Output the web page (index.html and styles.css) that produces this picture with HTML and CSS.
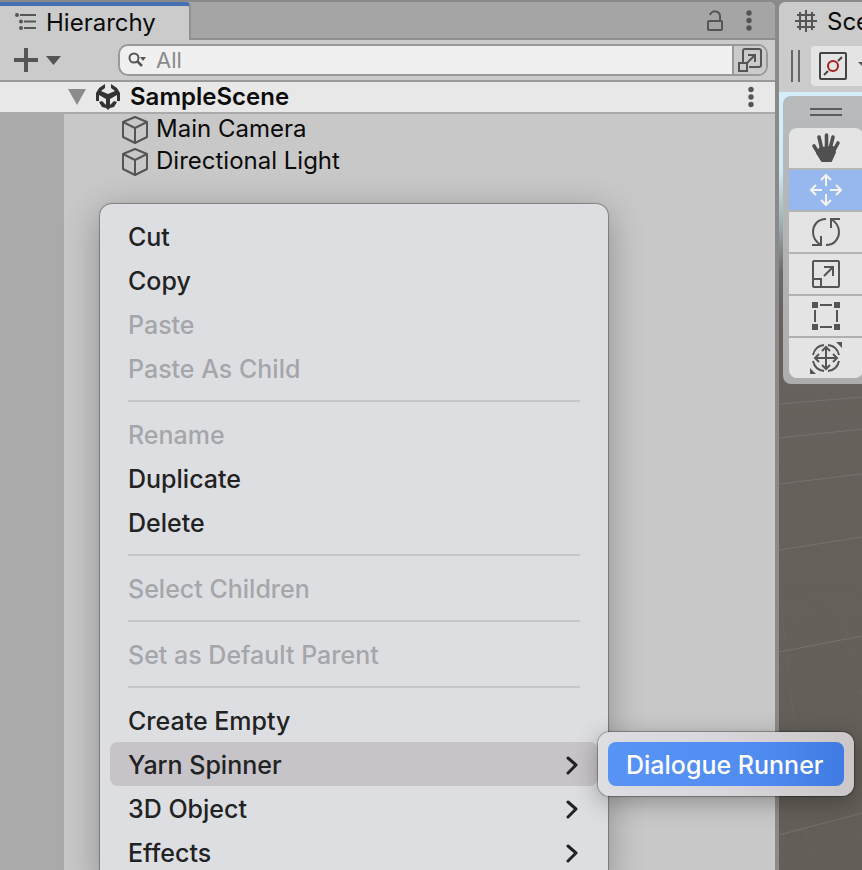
FILE: index.html
```html
<!DOCTYPE html>
<html lang="en">
<head>
  <meta charset="UTF-8" />
  <meta name="viewport" content="width=device-width, initial-scale=1" />
  <title>Hierarchy</title>
  <link rel="stylesheet" href="styles.css">
</head>
<body>

<div class="editor">
  <section class="hierarchy">
    <div class="tab-bar">
      <button class="tab">
        <svg width="22" height="18" viewBox="0 0 22 18" fill="none" stroke="#555" stroke-width="2">
          <path d="M5 2h16M9 8.500h12M9 15h12" />
          <g fill="#555" stroke="none"><circle cx="2" cy="2" r="2" /><circle cx="6" cy="8.500" r="2" /><circle cx="6" cy="15" r="2" /></g>
        </svg>
        Hierarchy
      </button>
      <div class="tab-tools">
        <button class="icon-btn" aria-label="Lock">
          <svg width="18" height="22" viewBox="0 0 18 22" fill="none" stroke="#555" stroke-width="2">
            <rect x="2" y="11" width="14" height="9" rx="1" />
            <path d="M4 5c1-3 4-4 6-3.500c3 .6 4 2.500 4 5V11" />
          </svg>
        </button>
        <button class="icon-btn" aria-label="Panel menu">
          <svg width="6" height="22" viewBox="0 0 6 22" fill="#555"><circle cx="3" cy="3" r="2.700" /><circle cx="3" cy="10.500" r="2.700" /><circle cx="3" cy="18" r="2.700" /></svg>
        </button>
      </div>
    </div>

    <div class="toolbar">
      <button class="icon-btn add" aria-label="Create">
        <svg width="48" height="24" viewBox="0 0 48 24">
          <path d="M12 0v24M0 12h24" stroke="#555" stroke-width="4" />
          <path d="M32 8h15l-7.500 9z" fill="#555" />
        </svg>
      </button>
      <div class="search">
        <svg class="search-icon" width="20" height="16" viewBox="0 0 20 16" fill="none" stroke="#555" stroke-width="2">
          <circle cx="6" cy="6" r="4.500" />
          <path d="M9 9l5 5" stroke-width="2.500" />
          <path d="M12 5h6l-3 4z" fill="#555" stroke="none" />
        </svg>
        <input type="text" placeholder="All" aria-label="Search hierarchy">
        <button class="icon-btn picker" aria-label="Open search window">
          <svg width="24" height="24" viewBox="0 0 24 24" fill="none" stroke="#555" stroke-width="2">
            <path d="M5 14V3q0-2 2-2h14q2 0 2 2v14q0 2-2 2H11" />
            <rect x="1" y="15" width="8" height="8" />
            <path d="M9 15l8-8M10 7h7v7" />
          </svg>
        </button>
      </div>
    </div>

    <div class="scene-row">
      <svg width="18" height="16" viewBox="0 0 18 16"><path d="M0 0h18L9 16z" fill="#8c8c8c" /></svg>
      <svg class="unity" width="24" height="26" viewBox="0 0 24 26" fill="#333">
        <path d="M9 0v4L5 7l7 3 7-3-4-3V0l6 4 3 5v8h-3v-6l-7 4v6h-4v-6l-7-4v6H0V9l3-5z" />
        <path d="M3 18l3-1 4 4h4l4-4 3 1-3 5-4 1-2 2-2-2-4-1z" />
      </svg>
      <h1>SampleScene</h1>
      <button class="icon-btn" aria-label="Scene menu">
        <svg width="6" height="22" viewBox="0 0 6 22" fill="#555"><circle cx="3" cy="3.500" r="2.700" /><circle cx="3" cy="11" r="2.700" /><circle cx="3" cy="18.500" r="2.700" /></svg>
      </button>
    </div>

    <ul class="tree">
      <li>
        <svg width="26" height="28" viewBox="0 0 26 28" fill="none" stroke="#555" stroke-width="2" stroke-linejoin="round"><path d="M13 1l12 5v15l-12 6-12-6V6zM1 6l12 6 12-6M13 12v15" /></svg>
        Main Camera
      </li>
      <li>
        <svg width="26" height="28" viewBox="0 0 26 28" fill="none" stroke="#555" stroke-width="2" stroke-linejoin="round"><path d="M13 1l12 5v15l-12 6-12-6V6zM1 6l12 6 12-6M13 12v15" /></svg>
        Directional Light
      </li>
    </ul>
  </section>

  <section class="scene">
    <div class="scene-tab">
      <svg width="22" height="22" viewBox="0 0 22 22" stroke="#555" stroke-width="2"><path d="M5 2v18M11 0v22M17 2v18M2 5h18M0 11h22M2 17h18" /></svg>
      Scene
    </div>
    <div class="scene-tools">
      <span class="grip"></span>
      <button class="pivot" aria-label="Pivot mode">
        <svg width="54" height="28" viewBox="0 0 54 28" fill="none" stroke="#444" stroke-width="2">
          <rect x="1" y="1" width="26" height="26" rx="1" />
          <path d="M5 23l4-4M19 9l4-4" />
          <circle cx="14" cy="14" r="5" stroke="#a8201a" />
          <path d="M39 10h12l-6 6z" fill="#555" stroke="none" />
        </svg>
      </button>
    </div>
    <div class="viewport">
      <svg class="grid-lines" width="100%" height="778" viewBox="0 0 83 778" preserveAspectRatio="none" fill="none">
        <path d="M0 312l83-7M0 346l83-9M0 392l83-10M0 458l83-13M0 560l83-16M0 743l83-22" stroke="#75726f" />
        <path d="M0 513l83-14M0 523l83-14M0 533l83-15M0 547l83-15M0 574l83-17M0 588l83-18M0 603l83-19M0 620l83-20M0 770l83-24M2 510l14 130 16 138M60 503l23 100" stroke="#6c6761" stroke-opacity="0.5" />
      </svg>
      <div class="tools">
        <span class="handle"></span>
        <button aria-label="View tool">
          <svg width="32" height="32" viewBox="0 0 32 32" fill="none" stroke="#505050" stroke-linecap="round" stroke-linejoin="round">
            <path d="M12 18L9 5M16.500 17V3M20 17l3-12M23 20l5-9M9 22l-5-8" stroke-width="3.600" />
            <path d="M10 16l13-1 2 5-4 9h-9l-5-8z" fill="#505050" stroke-width="2" />
          </svg>
        </button>
        <button class="active" aria-label="Move tool">
          <svg width="32" height="32" viewBox="0 0 32 32" fill="none" stroke="#f4f4f4" stroke-width="2"><path d="M16 12V1M11 6l5-5 5 5M16 20v11M11 26l5 5 5-5M12 16H1M6 11l-5 5 5 5M20 16h11M26 11l5 5-5 5" /></svg>
        </button>
        <button aria-label="Rotate tool">
          <svg width="32" height="32" viewBox="0 0 32 32" fill="none" stroke="#555" stroke-width="2"><path d="M16 3C7 3 3 10 3 16s3 10 8 13M2 29h9v-9M16 29c9 0 13-7 13-13S26 6 21 3M30 3h-9v9" /></svg>
        </button>
        <button aria-label="Scale tool">
          <svg width="32" height="32" viewBox="0 0 32 32" fill="none" stroke="#555" stroke-width="2"><rect x="3" y="3" width="26" height="26" rx="1" /><path d="M3 21h8v8M14 18l9-9M14 9h9v9" /></svg>
        </button>
        <button aria-label="Rect tool">
          <svg width="32" height="32" viewBox="0 0 32 32" fill="#555"><path d="M2 2h6v6H2zM24 2h6v6h-6zM2 24h6v6H2zM24 24h6v6h-6zM10 4h12v2H10zM10 26h12v2H10zM4 10h2v12H4zM26 10h2v12h-2z" /></svg>
        </button>
        <button aria-label="Transform tool">
          <svg width="32" height="32" viewBox="0 0 32 32" fill="none" stroke="#555" stroke-width="2">
            <path d="M16 6v20M6 16h20M12 9l4-4 4 4M12 23l4 4 4-4M9 12l-4 4 4 4M23 12l4 4-4 4" />
            <path d="M14 3Q5 4 3 13M18 3Q27 4 29 13M14 29Q5 28 3 19M18 29Q27 28 29 19" />
            <path d="M26 0h6v6zM0 26v6h6z" fill="#555" stroke="none" />
          </svg>
        </button>
      </div>
    </div>
  </section>
</div>

<ul class="menu">
  <li><button>Cut</button></li>
  <li><button>Copy</button></li>
  <li><button disabled>Paste</button></li>
  <li><button disabled>Paste As Child</button></li>
  <li class="separator"></li>
  <li><button disabled>Rename</button></li>
  <li><button>Duplicate</button></li>
  <li><button>Delete</button></li>
  <li class="separator"></li>
  <li><button disabled>Select Children</button></li>
  <li class="separator"></li>
  <li><button disabled>Set as Default Parent</button></li>
  <li class="separator"></li>
  <li><button>Create Empty</button></li>
  <li class="has-submenu">
    <button class="open">Yarn Spinner
      <svg width="14" height="20" viewBox="0 0 14 20"><path d="M2 3l8 7-8 8" /></svg>
    </button>
    <ul class="menu submenu">
      <li><button class="selected">Dialogue Runner</button></li>
    </ul>
  </li>
  <li><button>3D Object
    <svg width="14" height="20" viewBox="0 0 14 20"><path d="M2 3l8 7-8 8" /></svg>
  </button></li>
  <li><button>Effects
    <svg width="14" height="20" viewBox="0 0 14 20"><path d="M2 3l8 7-8 8" /></svg>
  </button></li>
</ul>

</body>
</html>
```
FILE: styles.css
```css
:root {
  --panel: #cbcbcb;
  --line: #999;
  --divider: #8a8a8a;
  --menu-bg: #dddee2;
}

* {
  box-sizing: border-box;
}

body {
  margin: 0;
  height: 100vh;
  overflow: hidden;
  position: relative;
  font-family: Inter, "Liberation Sans", sans-serif;
  font-size: 24px;
  color: #0b0b0b;
}

button {
  font: inherit;
  color: inherit;
  border: none;
  background: none;
  padding: 0;
  cursor: pointer;
}

svg {
  display: block;
  flex: none;
}

ul {
  list-style: none;
  margin: 0;
  padding: 0;
}

.editor {
  display: grid;
  grid-template-columns: minmax(0, 1fr) 83px;
  gap: 4px;
  height: 100%;
  padding-top: 2px;
  background: var(--divider);
}

/* Hierarchy panel */
.hierarchy {
  display: flex;
  flex-direction: column;
  background: #c8c8c8;
  border-top-right-radius: 6px;
  overflow: hidden;
}

.tab-bar {
  display: flex;
  justify-content: space-between;
  height: 38px;
  background: #a5a5a5;
  box-shadow: inset 0 -2px #8f8f8f;
}

.tab {
  display: flex;
  align-items: center;
  gap: 9px;
  width: 191px;
  padding: 0 0 2px 15px;
  background: var(--panel);
  border-top: 4px solid #4370b0;
  border-right: 2px solid #8f8f8f;
  border-top-right-radius: 5px;
}

.tab-tools {
  display: flex;
  align-items: center;
  gap: 22px;
  padding-right: 23px;
}

.toolbar {
  display: flex;
  align-items: center;
  justify-content: space-between;
  height: 42px;
  padding: 0 7px 0 14px;
  background: var(--panel);
  border-bottom: 2px solid var(--line);
}

.search {
  display: flex;
  align-items: center;
  flex: 1;
  height: 32px;
  margin-left: 56px;
  background: #f0f0f0;
  border: 2px solid var(--line);
  border-radius: 10px;
  overflow: hidden;
}

.search-icon {
  margin: 0 8px;
}

.search input {
  flex: 1;
  min-width: 0;
  border: none;
  outline: none;
  background: none;
  padding: 0;
  font: inherit;
  font-size: 22px;
}

.search input::placeholder {
  color: #8a8a8a;
}

.picker {
  width: 34px;
  height: 100%;
  padding-left: 4px;
  background: var(--panel);
  border-left: 2px solid var(--line);
}

.scene-row {
  display: flex;
  align-items: center;
  height: 32px;
  padding: 0 21px 0 68px;
  background: #e8e8e8;
  border-bottom: 2px solid #aaa;
}

.unity {
  margin: 0 10px;
}

.scene-row h1 {
  flex: 1;
  margin: 0;
  font-size: 24px;
  line-height: 28px;
  font-weight: 600;
}

.tree {
  flex: 1;
  border-left: 64px solid #aaa;
}

.tree li {
  display: flex;
  gap: 8px;
  height: 32px;
  padding-left: 58px;
  line-height: 29px;
}

.tree svg {
  margin-top: 2px;
}

/* Scene panel */
.scene {
  display: flex;
  flex-direction: column;
  min-width: 0;
  overflow: hidden;
  background: var(--panel);
  border-top-left-radius: 6px;
}

.scene-tab {
  display: flex;
  align-items: center;
  gap: 10px;
  height: 38px;
  padding-left: 16px;
}

.scene-tools {
  display: flex;
  align-items: center;
  gap: 11px;
  height: 52px;
  padding-left: 12px;
}

.grip {
  flex: none;
  width: 9px;
  height: 32px;
  border: solid #666;
  border-width: 0 2px;
}

.pivot {
  padding: 6px 8px;
  background: #e4e4e4;
  border-radius: 4px;
}

.viewport {
  position: relative;
  flex: 1;
  padding: 4px 0 0 4px;
  background: linear-gradient(#d3eefb, #cfeaf4 80px, #9fb1b5 130px, #6e6b67 180px, #67625d 220px, #635e57);
}

.grid-lines {
  position: absolute;
  inset: 0;
}

.tools {
  position: relative;
  display: flex;
  flex-direction: column;
  gap: 2px;
  width: 86px;
  padding: 0 6px 6px;
  background: linear-gradient(#b8bbbc, #adadad);
  border-radius: 8px;
}

.handle {
  align-self: center;
  width: 32px;
  height: 8px;
  margin: 12px 0 10px;
  border: solid #5c5c5c;
  border-width: 2px 0;
}

.tools button {
  display: flex;
  align-items: center;
  justify-content: center;
  height: 40px;
  background: #e4e4e4;
}

.tools button:nth-of-type(1) {
  border-radius: 8px 8px 0 0;
}

.tools button:last-child {
  border-radius: 0 0 8px 8px;
}

.tools .active {
  background: #96b8ee;
}

/* Context menu */
.menu {
  position: absolute;
  top: 204px;
  left: 100px;
  width: 508px;
  padding: 10px;
  font-size: 25px;
  font-weight: 500;
  color: #222;
  background: var(--menu-bg);
  border-radius: 12px;
  box-shadow: 0 0 1px 1px rgba(0, 0, 0, 0.3), 0 8px 36px rgba(0, 0, 0, 0.3);
}

.menu button {
  display: flex;
  align-items: center;
  justify-content: space-between;
  width: 100%;
  height: 44px;
  padding: 2px 18px 0;
  border-radius: 8px;
  white-space: nowrap;
}

.menu button:disabled {
  color: #a5a6aa;
}

.menu button path {
  fill: none;
  stroke: #222;
  stroke-width: 3;
  stroke-linecap: round;
  stroke-linejoin: round;
}

.separator {
  height: 2px;
  margin: 10px 18px;
  background: #c5c6ca;
}

.menu .open {
  background: #c6c4c9;
}

.has-submenu {
  position: relative;
}

.submenu {
  top: -10px;
  left: 100%;
  width: 256px;
  background: linear-gradient(90deg, #dddee2, #d8d6da 50%, #cbc7c8);
  box-shadow: 0 0 1px 1px rgba(0, 0, 0, 0.3), 0 6px 24px rgba(0, 0, 0, 0.3);
}

.menu .selected {
  color: #fff;
  background: linear-gradient(90deg, #5893f6, #518df1 60%, #3f7be2);
}
```
